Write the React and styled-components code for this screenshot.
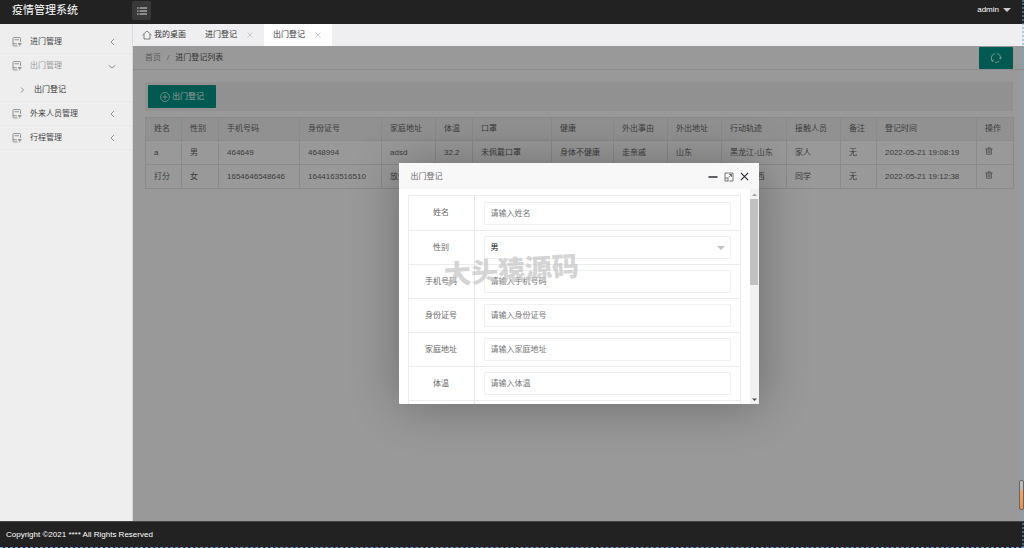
import React from "react";
import styled, { createGlobalStyle } from "styled-components";

const Global = createGlobalStyle`
  * { box-sizing: border-box; }
  html, body, #root { height: 100%; }
  body {
    margin: 0;
    font: 8px/12px "Liberation Sans", "Noto Sans CJK SC", sans-serif;
    color: #333;
    background: #fff;
  }
  button, input, select { font: inherit; color: inherit; margin: 0; }
  button { border: 0; padding: 0; background: none; cursor: pointer; }
  a { color: inherit; text-decoration: none; }
`;

const Page = styled.div`
  position: relative;
  min-height: 100vh;
  display: flex;
  flex-direction: column;
  overflow: hidden;
`;

const TopBar = styled.header`
  height: 24px;
  display: flex;
  align-items: flex-start;
  background: #222;
  color: #fff;
`;
const Brand = styled.a`
  width: 132px;
  padding-left: 12px;
  font-size: 11px;
  line-height: 20px;
`;
const MenuToggle = styled.button`
  display: grid;
  place-items: center;
  width: 19px;
  height: 19px;
  margin-top: 1px;
  border-radius: 2px;
  background: #393939;
`;
const UserMenu = styled.button`
  display: flex;
  align-items: center;
  gap: 4px;
  height: 20px;
  margin-left: auto;
  margin-right: 13px;
  color: #fff;
`;
const Caret = styled.span`
  border: 4px solid transparent;
  border-top-color: ${(p) => p.$color};
  border-bottom-width: 0;
`;

const Body = styled.div`
  flex: 1;
  display: flex;
  min-height: 0;
`;
const Sidebar = styled.nav`
  width: 133px;
  padding-top: 6px;
  background: #eee;
  border-right: 1px solid #d8d8d8;
  svg { color: #777; }
`;
const NavItem = styled.a`
  display: flex;
  align-items: center;
  gap: 8px;
  height: 24px;
  padding: 1px 16px 0 12px;
  color: ${(p) => (p.$open ? "#999" : "#444")};
  border-bottom: 1px solid ${(p) => (p.$open ? "transparent" : "#e6e6e6")};
  & > span { flex: 1; }
`;
const SubItem = styled.a`
  display: flex;
  align-items: center;
  gap: 9px;
  height: 24px;
  padding: 1px 0 0 19px;
  border-bottom: 1px solid #e6e6e6;
`;

const Main = styled.main`
  flex: 1;
  min-width: 0;
  display: flex;
  flex-direction: column;
`;
const Tabs = styled.div`
  display: flex;
  height: 22px;
  background: #efeef0;
`;
const Tab = styled.button`
  display: flex;
  align-items: center;
  gap: ${(p) => (p.$home ? 2 : 10)}px;
  padding: 0 ${(p) => (p.$home ? 10 : 11)}px 0 9px;
  background: ${(p) => (p.$active ? "#fff" : "transparent")};
`;

const Frame = styled.section`
  position: relative;
  flex: 1;
  background: #fff;
  color: #666;
`;
const CrumbBar = styled.div`
  display: flex;
  align-items: center;
  height: 24px;
  padding: 1px 11px 0 12px;
  border-bottom: 1px solid #e9e9e9;
`;
const Crumbs = styled.div`
  display: flex;
  gap: 6px;
  flex: 1;
  color: #999;
  & > span:last-child { color: #555; }
`;
const GreenButton = styled.button`
  display: flex;
  align-items: center;
  justify-content: center;
  gap: 2px;
  width: ${(p) => p.$width}px;
  height: ${(p) => p.$height}px;
  border-radius: 1px;
  background: #009688;
  color: #fff;
`;
const Content = styled.div`
  padding: 12px 11px 12px 12px;
`;
const ToolBar = styled.div`
  padding: 3px;
  height: 29px;
  margin-bottom: 6px;
  background: #f2f2f2;
`;
const DataTable = styled.table`
  width: 100%;
  table-layout: fixed;
  border-collapse: collapse;
  th, td {
    height: 24px;
    padding: 0 0 0 8px;
    border: 1px solid #e7e7e7;
    text-align: left;
    font-weight: 400;
    white-space: nowrap;
  }
  th { height: 23px; background: #f2f2f2; }
`;
const Trash = styled.button`
  display: block;
`;

const Shade = styled.div`
  position: absolute;
  inset: 0;
  display: grid;
  place-items: center;
  background: rgba(0, 0, 0, 0.4);
`;
const Dialog = styled.div`
  position: relative;
  width: 360px;
  height: 241px;
  display: flex;
  flex-direction: column;
  background: #fff;
  border-radius: 1px;
  box-shadow: 1px 1px 50px rgba(0, 0, 0, 0.3);
`;
const DialogHead = styled.div`
  display: flex;
  align-items: center;
  gap: 6px;
  height: 26px;
  padding: 1px 10px 0 12px;
  background: #f8f8f8;
  & > span { flex: 1; }
  & > button { display: grid; }
`;
const DialogBody = styled.div`
  flex: 1;
  min-height: 0;
  display: flex;
`;
const Form = styled.form`
  flex: 1;
  padding: 6px 9px 0;
  overflow: hidden;
`;
const FormRow = styled.div`
  display: flex;
  height: ${(p) => (p.$first ? 36 : 34)}px;
  border: 1px solid #ececec;
  border-top-width: ${(p) => (p.$first ? 1 : 0)}px;
  & > label {
    display: grid;
    place-items: center;
    width: 66px;
    border-right: 1px solid #e6e6e6;
  }
`;
const Field = styled.div`
  position: relative;
  flex: 1;
  display: flex;
  align-items: center;
  padding: 0 9px;
  & > ${Caret} {
    position: absolute;
    right: 15px;
    pointer-events: none;
  }
`;
const Input = styled.input`
  width: 100%;
  height: 23px;
  padding: 0 6px;
  border: 1px solid #f0f0f0;
  border-radius: 1px;
  background: #fff;
  &::placeholder { color: #757575; }
`;
const Select = styled.select`
  appearance: none;
  width: 100%;
  height: 23px;
  padding: 0 6px;
  border: 1px solid #f0f0f0;
  border-radius: 1px;
  background: #fff;
  color: #111;
`;
const ScrollBar = styled.div`
  display: flex;
  flex-direction: column;
  align-items: center;
  width: 9px;
  background: #f1f1f1;
`;
const ScrollArrow = styled.span`
  display: grid;
  place-items: center;
  height: 10px;
`;
const Thumb = styled.span`
  width: 8px;
  height: 86px;
  margin-bottom: auto;
  background: #c1c1c1;
`;
const Watermark = styled.div`
  position: absolute;
  left: 45px;
  top: 91px;
  font-size: 27px;
  line-height: 34px;
  font-weight: 900;
  color: rgba(195, 195, 195, 0.7);
  white-space: nowrap;
  transform: rotate(-4deg);
  pointer-events: none;
`;

const Footer = styled.footer`
  height: 27px;
  padding-left: 6px;
  line-height: 26px;
  background: #222;
  color: #fff;
  border-top: 1px solid #444;
  border-bottom: 1px dashed #5fb0dc;
`;
const RightEdge = styled.div`
  position: absolute;
  top: 0;
  right: 0;
  bottom: 0;
  border-right: 2px dotted rgba(95, 176, 220, 0.5);
`;
const Gauge = styled.div`
  position: absolute;
  right: 0;
  bottom: 38px;
  width: 5px;
  height: 30px;
  border: 1px solid #666;
  border-radius: 2px;
  background: linear-gradient(#bbb 30%, #f0a468 32%, #ee8f48);
`;

const Svg = ({ s = 10, w = s, h = s, box = "0 0 20 20", sw = 1.6, color = "currentColor", children }) => (
  <svg width={w} height={h} viewBox={box} fill="none" stroke={color} strokeWidth={sw} aria-hidden="true">
    {children}
  </svg>
);
const DocIcon = () => (
  <Svg sw={1.5}>
    <path d="M11 18H4a2 2 0 0 1-2-2V3a2 2 0 0 1 2-2h11a2 2 0 0 1 2 2v7M5 5.500h9M2 13.500h8" />
    <path d="M12 13h7M15.500 12v7M13 16l2.500-3 2.500 3" strokeWidth="1.300" />
  </Svg>
);
const ChevronLeft = () => <Svg w={7} h={8} box="0 0 14 16" sw={1.6}><path d="M10 2L4 8l6 6" /></Svg>;
const ChevronDown = () => <Svg w={8} h={7} box="0 0 16 14" sw={1.6}><path d="M1 4l7 6 7-6" /></Svg>;
const ChevronRight = () => <Svg w={6} h={6} box="0 0 12 12" sw={1.6}><path d="M4 1l5 5-5 5" /></Svg>;
const CloseMark = () => <Svg s={6} box="0 0 12 12" sw={1.5} color="#bbb"><path d="M1 1l10 10M11 1L1 11" /></Svg>;
const HomeIcon = () => <Svg sw={1.4} color="#555"><path d="M1 10L10 2l9 8M4 8v10h12V8" /></Svg>;
const ListIcon = () => (
  <Svg sw={2} color="#ddd"><path d="M0 4h3M5 4h15M0 10h3M5 10h15M0 16h3M5 16h15" /></Svg>
);
const PlusCircle = () => <Svg sw={1.4}><circle cx="10" cy="10" r="9" /><path d="M10 5v10M5 10h10" /></Svg>;
const RefreshIcon = () => (
  <Svg s={12} sw={1.4}>
    <path d="M4.500 15.500A7.500 7.500 0 0 1 8 2.800M11.500 2.600A7.500 7.500 0 0 1 17.400 11M15.500 15A7.500 7.500 0 0 1 8.500 17.400M2 13.500l2.800 2.300L6 12.500M15 9.500l2.400 2L19.500 9" />
  </Svg>
);
const TrashIcon = () => (
  <Svg s={8} sw={1.8}><path d="M1 5h18M7 4V2h6v2M4 5v13h12V5M8 8v7M12 8v7" /></Svg>
);

const columns = [
  ["姓名", 36], ["性别", 37], ["手机号码", 81], ["身份证号", 82], ["家庭地址", 54],
  ["体温", 37], ["口罩", 79], ["健康", 62], ["外出事由", 54], ["外出地址", 54],
  ["行动轨迹", 65], ["接触人员", 54], ["备注", 36], ["登记时间", 100], ["操作", 37],
];
const rows = [
  ["a", "男", "464649", "4648994", "adsd", "32.2", "未佩戴口罩", "身体不健康", "走亲戚", "山东", "黑龙江-山东", "家人", "无", "2022-05-21 19:08:19"],
  ["打分", "女", "1654646548646", "1644163516510", "放假", "36.5", "佩戴口罩", "身体健康", "旅游", "山西", "山东-山西", "同学", "无", "2022-05-21 19:12:38"],
];
const fields = ["姓名", "性别", "手机号码", "身份证号", "家庭地址", "体温"];

export default function App() {
  return (
    <Page>
      <Global />
      <TopBar>
        <Brand href="#">疫情管理系统</Brand>
        <MenuToggle aria-label="菜单"><ListIcon /></MenuToggle>
        <UserMenu>admin<Caret $color="#ccc" /></UserMenu>
      </TopBar>
      <Body>
        <Sidebar>
          <NavItem href="#"><DocIcon /><span>进门管理</span><ChevronLeft /></NavItem>
          <NavItem href="#" $open><DocIcon /><span>出门管理</span><ChevronDown /></NavItem>
          <SubItem href="#"><ChevronRight />出门登记</SubItem>
          <NavItem href="#"><DocIcon /><span>外来人员管理</span><ChevronLeft /></NavItem>
          <NavItem href="#"><DocIcon /><span>行程管理</span><ChevronLeft /></NavItem>
        </Sidebar>
        <Main>
          <Tabs>
            <Tab $home><HomeIcon />我的桌面</Tab>
            <Tab>进门登记<CloseMark /></Tab>
            <Tab $active>出门登记<CloseMark /></Tab>
          </Tabs>
          <Frame>
            <CrumbBar>
              <Crumbs><a href="#">首页</a><span>/</span><span>进门登记列表</span></Crumbs>
              <GreenButton $width={34} $height={22} aria-label="刷新"><RefreshIcon /></GreenButton>
            </CrumbBar>
            <Content>
              <ToolBar>
                <GreenButton $width={68} $height={23}><PlusCircle />出门登记</GreenButton>
              </ToolBar>
              <DataTable>
                <colgroup>{columns.map(([name, w]) => <col key={name} width={w} />)}</colgroup>
                <thead><tr>{columns.map(([name]) => <th key={name}>{name}</th>)}</tr></thead>
                <tbody>
                  {rows.map((row) => (
                    <tr key={row[0]}>
                      {row.map((cell, i) => <td key={i}>{cell}</td>)}
                      <td><Trash aria-label="删除"><TrashIcon /></Trash></td>
                    </tr>
                  ))}
                </tbody>
              </DataTable>
            </Content>
            <Shade>
              <Dialog role="dialog" aria-label="出门登记">
                <DialogHead>
                  <span>出门登记</span>
                  <button aria-label="最小化"><Svg sw={3} color="#2d2c3b"><path d="M1 10h18" /></Svg></button>
                  <button aria-label="最大化">
                    <Svg sw={1.8} color="#666"><path d="M9 2H2v7M2 9v9h7M11 18h7v-7M9 2h9v9M2 12h6v6M9 11l6-6M10 5h5v5" /></Svg>
                  </button>
                  <button aria-label="关闭"><Svg s={9} sw={2.6} color="#2d2c3b"><path d="M2 2l16 16M18 2L2 18" /></Svg></button>
                </DialogHead>
                <DialogBody>
                  <Form>
                    {fields.map((name, i) => (
                      <FormRow key={name} $first={i === 0}>
                        <label htmlFor={`f${i}`}>{name}</label>
                        <Field>
                          {name === "性别" ? (
                            <>
                              <Select id={`f${i}`} defaultValue="男"><option>男</option><option>女</option></Select>
                              <Caret $color="#c2c2c2" />
                            </>
                          ) : (
                            <Input id={`f${i}`} placeholder={`请输入${name}`} />
                          )}
                        </Field>
                      </FormRow>
                    ))}
                    <FormRow><label /></FormRow>
                  </Form>
                  <ScrollBar>
                    <ScrollArrow><Svg s={5} box="0 0 10 10"><path d="M0 8l5-5 5 5z" fill="#a3a3a3" stroke="none" /></Svg></ScrollArrow>
                    <Thumb />
                    <ScrollArrow><Svg s={5} box="0 0 10 10"><path d="M0 3l5 5 5-5z" fill="#505050" stroke="none" /></Svg></ScrollArrow>
                  </ScrollBar>
                </DialogBody>
                <Watermark>大头猿源码</Watermark>
              </Dialog>
            </Shade>
          </Frame>
        </Main>
      </Body>
      <Footer>Copyright ©2021 **** All Rights Reserved</Footer>
      <RightEdge />
      <Gauge />
    </Page>
  );
}
